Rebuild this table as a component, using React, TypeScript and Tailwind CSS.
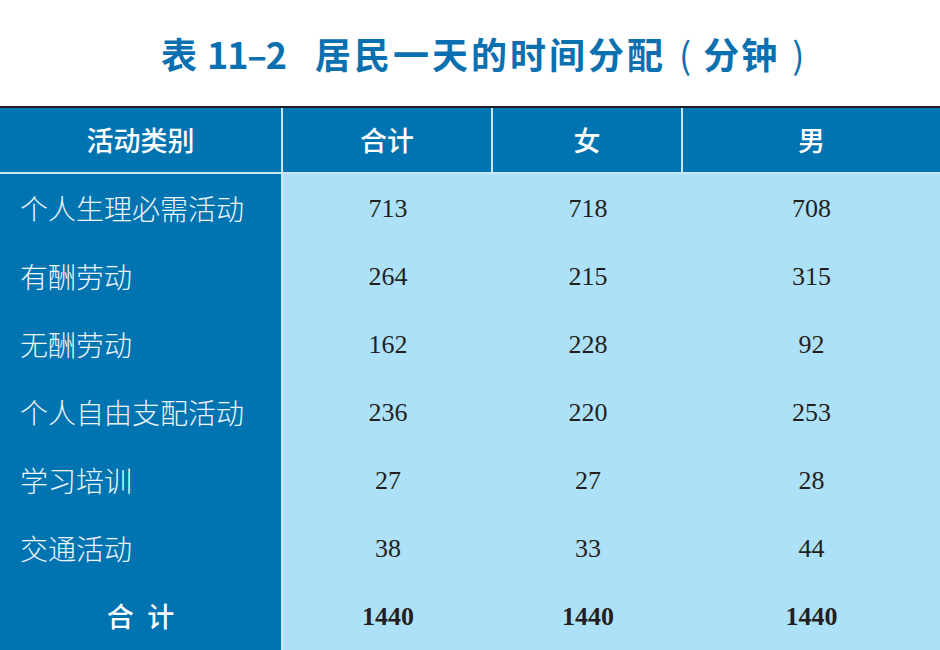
const rows = [
  { name: "个人生理必需活动", total: "713", female: "718", male: "708" },
  { name: "有酬劳动", total: "264", female: "215", male: "315" },
  { name: "无酬劳动", total: "162", female: "228", male: "92" },
  { name: "个人自由支配活动", total: "236", female: "220", male: "253" },
  { name: "学习培训", total: "27", female: "27", male: "28" },
  { name: "交通活动", total: "38", female: "33", male: "44" },
];

const cjk = "font-['Noto_Sans_CJK_SC',sans-serif]";
const serif = "font-['Liberation_Serif','Noto_Sans_CJK_SC',serif]";

export default function App() {
  return (
    <div className="w-[940px] h-[650px] bg-white overflow-hidden">
      <div className="h-[106px] flex items-center pl-[161px]">
        <h1 className={`${cjk} text-[36px] font-bold text-[#0b70b0] leading-none flex items-center whitespace-nowrap`}>
          <span>表</span>
          <span className="ml-[10px] tracking-[-0.03em]">11–2</span>
          <span className="ml-[29px] tracking-[3px]">居民一天的时间分配</span>
          <span className="ml-[13px] font-normal">(</span>
          <span className="ml-[12px] tracking-[2px]">分钟</span>
          <span className="ml-[13px] font-normal">)</span>
        </h1>
      </div>

      <div className="border-t-2 border-[#231f20]">
        <div className={`${cjk} flex h-[66px] bg-[#0073b1] text-white text-[27px] font-medium border-b-2 border-[#cbe7f6]`}>
          <div className="w-[283px] flex items-center justify-center border-r-2 border-[#cbe7f6]">活动类别</div>
          <div className="w-[210px] flex items-center justify-center border-r-2 border-[#cbe7f6]">合计</div>
          <div className="w-[190px] flex items-center justify-center border-r-2 border-[#cbe7f6]">女</div>
          <div className="flex-1 flex items-center justify-center">男</div>
        </div>

        {rows.map((r) => (
          <div key={r.name} className="flex h-[68px]">
            <div className={`${cjk} w-[283px] bg-[#0073b1] border-r-2 border-[#cbe7f6] flex items-center pl-[20px] text-[28px] font-light text-[#eef5fb]`}>
              {r.name}
            </div>
            <div className={`${serif} flex-1 flex bg-[#ade1f8] text-[26px] text-[#231f20]`}>
              <div className="w-[210px] flex items-center justify-center">{r.total}</div>
              <div className="w-[190px] flex items-center justify-center">{r.female}</div>
              <div className="flex-1 flex items-center justify-center">{r.male}</div>
            </div>
          </div>
        ))}

        <div className="flex h-[68px]">
          <div className={`${cjk} w-[283px] bg-[#0073b1] border-r-2 border-[#cbe7f6] flex items-center justify-center text-[27px] font-medium text-white tracking-[0.5em] pl-[0.5em]`}>
            合计
          </div>
          <div className={`${serif} flex-1 flex bg-[#ade1f8] text-[26px] font-bold text-[#231f20]`}>
            <div className="w-[210px] flex items-center justify-center">1440</div>
            <div className="w-[190px] flex items-center justify-center">1440</div>
            <div className="flex-1 flex items-center justify-center">1440</div>
          </div>
        </div>
      </div>
    </div>
  );
}
